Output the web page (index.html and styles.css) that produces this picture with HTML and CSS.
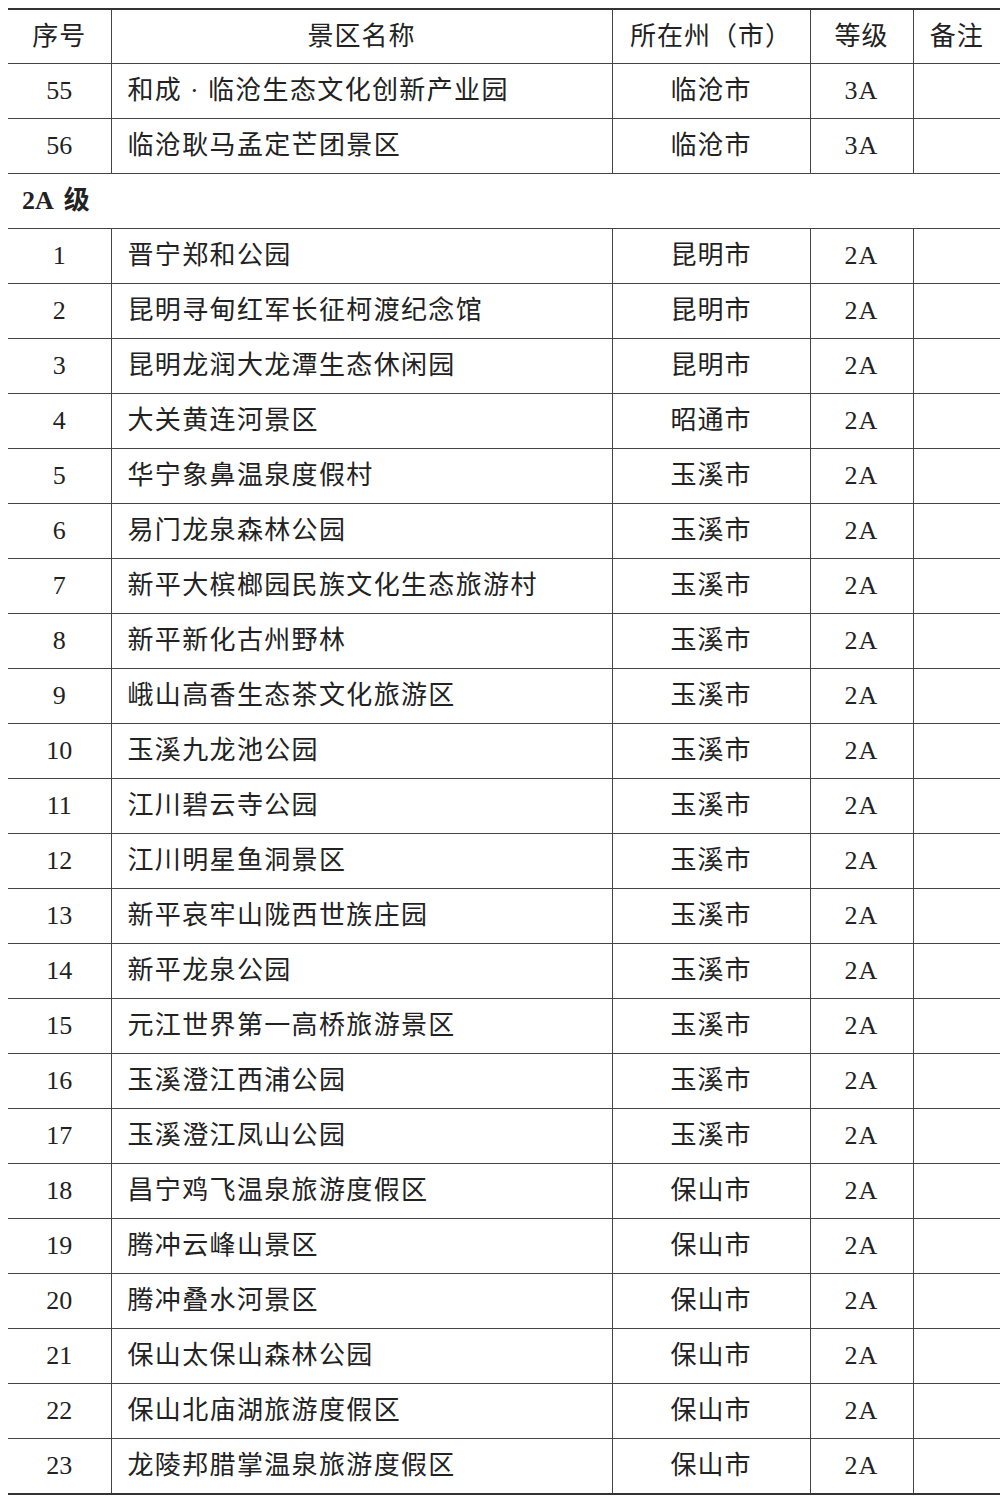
FILE: index.html
```html
<!DOCTYPE html>
<html lang="zh">
<head>
<meta charset="utf-8">
<link rel="stylesheet" href="styles.css">
</head>
<body>
<table class="list">
<colgroup>
<col class="c-no"><col class="c-name"><col class="c-city"><col class="c-grade"><col class="c-note">
</colgroup>
<thead>
<tr><th>序号</th><th>景区名称</th><th>所在州（市）</th><th>等级</th><th>备注</th></tr>
</thead>
<tbody>
<tr><td>55</td><td class="name">和成 · 临沧生态文化创新产业园</td><td class="city">临沧市</td><td class="grade">3A</td><td></td></tr>
<tr><td>56</td><td class="name">临沧耿马孟定芒团景区</td><td class="city">临沧市</td><td class="grade">3A</td><td></td></tr>
<tr class="section"><td colspan="5"><b>2A</b><b class="lvl">级</b></td></tr>
<tr><td>1</td><td class="name">晋宁郑和公园</td><td class="city">昆明市</td><td class="grade">2A</td><td></td></tr>
<tr><td>2</td><td class="name">昆明寻甸红军长征柯渡纪念馆</td><td class="city">昆明市</td><td class="grade">2A</td><td></td></tr>
<tr><td>3</td><td class="name">昆明龙润大龙潭生态休闲园</td><td class="city">昆明市</td><td class="grade">2A</td><td></td></tr>
<tr><td>4</td><td class="name">大关黄连河景区</td><td class="city">昭通市</td><td class="grade">2A</td><td></td></tr>
<tr><td>5</td><td class="name">华宁象鼻温泉度假村</td><td class="city">玉溪市</td><td class="grade">2A</td><td></td></tr>
<tr><td>6</td><td class="name">易门龙泉森林公园</td><td class="city">玉溪市</td><td class="grade">2A</td><td></td></tr>
<tr><td>7</td><td class="name">新平大槟榔园民族文化生态旅游村</td><td class="city">玉溪市</td><td class="grade">2A</td><td></td></tr>
<tr><td>8</td><td class="name">新平新化古州野林</td><td class="city">玉溪市</td><td class="grade">2A</td><td></td></tr>
<tr><td>9</td><td class="name">峨山高香生态茶文化旅游区</td><td class="city">玉溪市</td><td class="grade">2A</td><td></td></tr>
<tr><td>10</td><td class="name">玉溪九龙池公园</td><td class="city">玉溪市</td><td class="grade">2A</td><td></td></tr>
<tr><td>11</td><td class="name">江川碧云寺公园</td><td class="city">玉溪市</td><td class="grade">2A</td><td></td></tr>
<tr><td>12</td><td class="name">江川明星鱼洞景区</td><td class="city">玉溪市</td><td class="grade">2A</td><td></td></tr>
<tr><td>13</td><td class="name">新平哀牢山陇西世族庄园</td><td class="city">玉溪市</td><td class="grade">2A</td><td></td></tr>
<tr><td>14</td><td class="name">新平龙泉公园</td><td class="city">玉溪市</td><td class="grade">2A</td><td></td></tr>
<tr><td>15</td><td class="name">元江世界第一高桥旅游景区</td><td class="city">玉溪市</td><td class="grade">2A</td><td></td></tr>
<tr><td>16</td><td class="name">玉溪澄江西浦公园</td><td class="city">玉溪市</td><td class="grade">2A</td><td></td></tr>
<tr><td>17</td><td class="name">玉溪澄江凤山公园</td><td class="city">玉溪市</td><td class="grade">2A</td><td></td></tr>
<tr><td>18</td><td class="name">昌宁鸡飞温泉旅游度假区</td><td class="city">保山市</td><td class="grade">2A</td><td></td></tr>
<tr><td>19</td><td class="name">腾冲云峰山景区</td><td class="city">保山市</td><td class="grade">2A</td><td></td></tr>
<tr><td>20</td><td class="name">腾冲叠水河景区</td><td class="city">保山市</td><td class="grade">2A</td><td></td></tr>
<tr><td>21</td><td class="name">保山太保山森林公园</td><td class="city">保山市</td><td class="grade">2A</td><td></td></tr>
<tr><td>22</td><td class="name">保山北庙湖旅游度假区</td><td class="city">保山市</td><td class="grade">2A</td><td></td></tr>
<tr><td>23</td><td class="name">龙陵邦腊掌温泉旅游度假区</td><td class="city">保山市</td><td class="grade">2A</td><td></td></tr>
</tbody>
</table>
</body>
</html>
```
FILE: styles.css
```css
html, body {
  margin: 0;
  background: #fff;
}
body {
  padding: 8px 7px 0 8px;
  font-family: "Liberation Serif", "Noto Sans CJK SC", serif;
  font-size: 26px;
  color: #222;
}
.list {
  width: 992px;
  border-collapse: collapse;
  table-layout: fixed;
  border-top: 2px solid #333;
  border-bottom: 2px solid #333;
}
.c-no { width: 103px; }
.c-name { width: 501px; }
.c-city { width: 198px; }
.c-grade { width: 103px; }
.c-note { width: 87px; }
.list th, .list td {
  height: 54px;
  padding: 0;
  text-align: center;
  vertical-align: middle;
  font-weight: normal;
  border-top: 1px solid #444;
  border-left: 1px solid #444;
  line-height: 1;
  white-space: nowrap;
}
.list th:first-child, .list td:first-child {
  border-left: none;
}
.list thead th {
  height: 53px;
  border-top: none;
  letter-spacing: 1px;
}
.list td.name {
  text-align: left;
  padding-left: 16px;
  letter-spacing: 1.35px;
}
.list td.city {
  letter-spacing: 1px;
}
.list td.grade {
  letter-spacing: 1px;
}
.section td {
  text-align: left;
  padding-left: 14px;
  border-left: none;
}
.section b {
  font-weight: bold;
}
.section .lvl {
  margin-left: 10px;
}
```
